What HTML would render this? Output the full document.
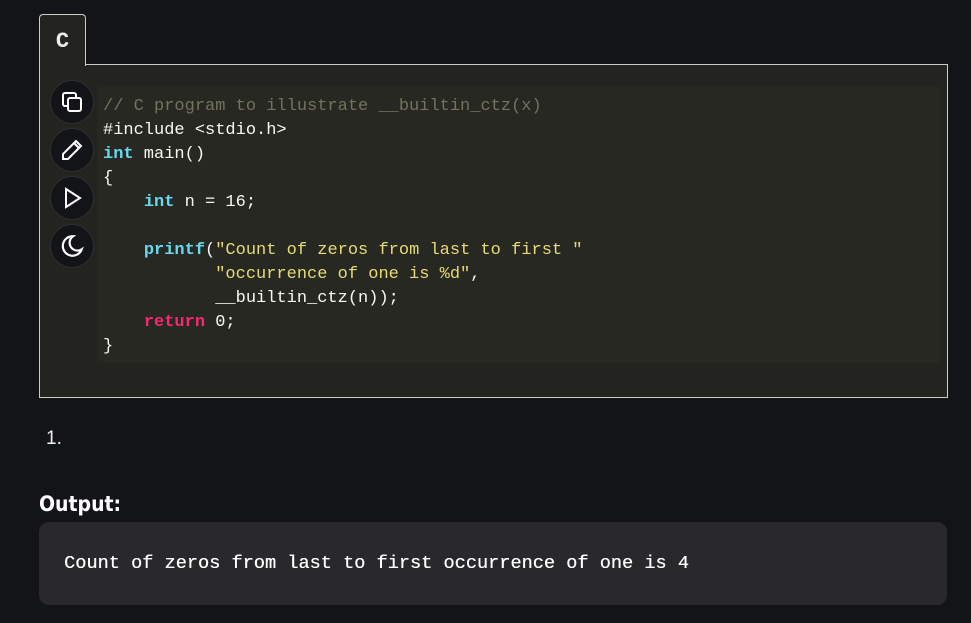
<!DOCTYPE html>
<html><head><style>
body{margin:0;width:971px;height:623px;background:#131417;position:relative;overflow:hidden;font-family:"Liberation Sans",sans-serif}
.tab{position:absolute;left:39px;top:14px;width:45px;height:51px;background:#232320;border:1px solid #ccc;border-bottom:none;border-radius:4px 4px 0 0;z-index:2;color:#eee;font:bold 22px "Liberation Mono",monospace;text-align:center;line-height:54px}
.box{position:absolute;left:39px;top:64px;width:907px;height:332px;background:#232320;border:1px solid #ccc}
.code{position:absolute;left:57px;top:22px;width:843px;height:276px;background:#282823}
pre{margin:0;position:absolute;left:6px;top:8px;font:17px/24px "Liberation Mono",monospace;color:#f8f8f2}
.c{color:#75715e}.k{color:#66d9ef;font-weight:bold}.s{color:#e6db74}.r{color:#f92672;font-weight:bold}
.btn{position:absolute;left:10px;width:42px;height:42px;border-radius:50%;background:#131417;border:1px solid #2e2f33;display:flex;align-items:center;justify-content:center}
.num{position:absolute;left:46px;top:428px;color:#eee;font-size:19px}
.out{position:absolute;left:39px;top:492px;color:#fff;font-size:21px;font-weight:bold;font-family:"DejaVu Sans Condensed","Liberation Sans",sans-serif}
.ob{position:absolute;left:39px;top:522px;width:908px;height:83px;border-radius:10px;background:#29292c;color:#fff;font:18.6px/83px "Liberation Mono",monospace;padding-left:25px;box-sizing:border-box;text-shadow:0.3px 0 0 #fff}
</style></head><body>
<div class="tab">C</div>
<div class="box">
<div class="btn" style="top:15px"><svg width="24" height="24" viewBox="0 0 24 24" fill="none" stroke="#fff" stroke-width="2"><rect x="8" y="8" width="13" height="13" rx="2"/><path d="M16 8V5a2 2 0 0 0-2-2H5a2 2 0 0 0-2 2v9a2 2 0 0 0 2 2h3"/></svg></div>
<div class="btn" style="top:63px"><svg width="24" height="24" viewBox="0 0 24 24" fill="none" stroke="#fff" stroke-width="2"><path d="M16 3l5 5L8 21H3v-5z"/><path d="M14 5l5 5"/></svg></div>
<div class="btn" style="top:111px"><svg width="24" height="24" viewBox="0 0 24 24" fill="none" stroke="#fff" stroke-width="2"><path d="M6 3l14 9-14 9z"/></svg></div>
<div class="btn" style="top:159px"><svg width="26" height="26" viewBox="0 0 24 24" fill="none" stroke="#fff" stroke-width="2"><path d="M13 3a9 9 0 1 0 8 12A7 7 0 0 1 13 3z"/></svg></div>
<div class="code"><pre><span class="c">// C program to illustrate __builtin_ctz(x)</span>
#include &lt;stdio.h&gt;
<span class="k">int</span> main()
{
    <span class="k">int</span> n = 16;

    <span class="k">printf</span>(<span class="s">"Count of zeros from last to first "</span>
           <span class="s">"occurrence of one is %d"</span>,
           __builtin_ctz(n));
    <span class="r">return</span> 0;
}</pre></div>
</div>
<div class="num">1.</div>
<div class="out">Output:</div>
<div class="ob">Count of zeros from last to first occurrence of one is 4</div>
</body></html>
